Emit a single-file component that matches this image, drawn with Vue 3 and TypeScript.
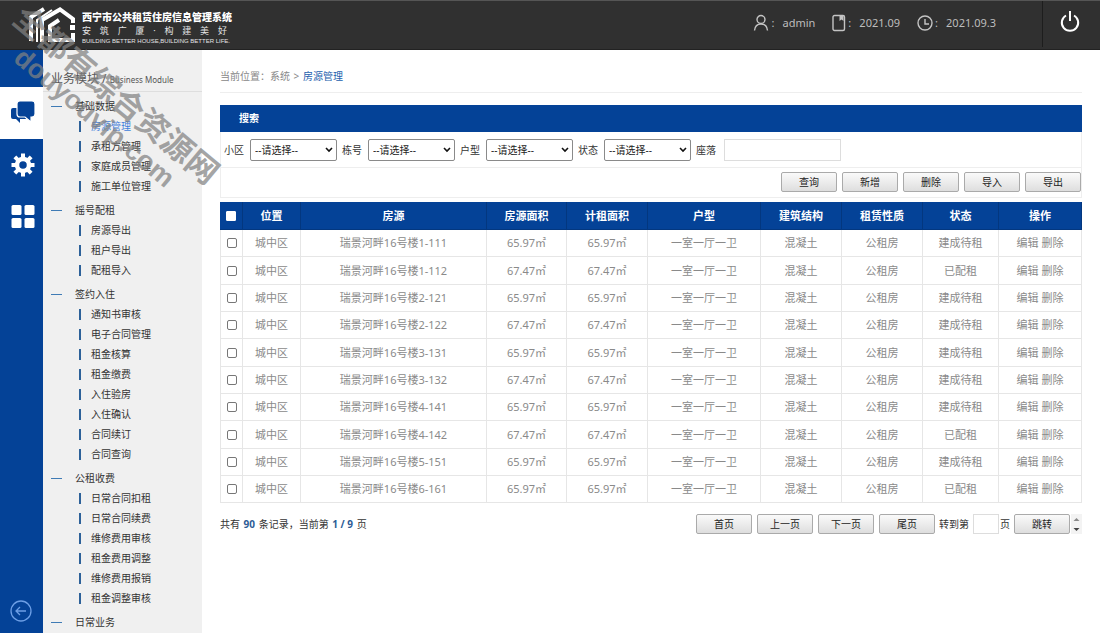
<script setup lang="ts">
import { ref } from 'vue'

interface MenuGroup {
  title: string
  items: string[]
}

interface House {
  name: string
  area: string
  status: string
}

const groups: MenuGroup[] = [
  { title: '基础数据', items: ['房源管理', '承租方管理', '家庭成员管理', '施工单位管理'] },
  { title: '摇号配租', items: ['房源导出', '租户导出', '配租导入'] },
  {
    title: '签约入住',
    items: ['通知书审核', '电子合同管理', '租金核算', '租金缴费', '入住验房', '入住确认', '合同续订', '合同查询'],
  },
  {
    title: '公租收费',
    items: ['日常合同扣租', '日常合同续费', '维修费用审核', '租金费用调整', '维修费用报销', '租金调整审核'],
  },
  { title: '日常业务', items: [] },
]

const filters: string[] = ['小区', '栋号', '户型', '状态']
const actions: string[] = ['查询', '新增', '删除', '导入', '导出']
const pagers: string[] = ['首页', '上一页', '下一页', '尾页']
const columns: string[] = ['位置', '房源', '房源面积', '计租面积', '户型', '建筑结构', '租赁性质', '状态', '操作']

const houses: House[] = [
  { name: '瑞景河畔16号楼1-111', area: '65.97㎡', status: '建成待租' },
  { name: '瑞景河畔16号楼1-112', area: '67.47㎡', status: '已配租' },
  { name: '瑞景河畔16号楼2-121', area: '65.97㎡', status: '建成待租' },
  { name: '瑞景河畔16号楼2-122', area: '67.47㎡', status: '建成待租' },
  { name: '瑞景河畔16号楼3-131', area: '65.97㎡', status: '建成待租' },
  { name: '瑞景河畔16号楼3-132', area: '67.47㎡', status: '建成待租' },
  { name: '瑞景河畔16号楼4-141', area: '65.97㎡', status: '建成待租' },
  { name: '瑞景河畔16号楼4-142', area: '67.47㎡', status: '已配租' },
  { name: '瑞景河畔16号楼5-151', area: '65.97㎡', status: '建成待租' },
  { name: '瑞景河畔16号楼6-161', area: '65.97㎡', status: '已配租' },
]

const active = ref('房源管理')
const address = ref('')
const targetPage = ref('')
</script>

<template>
  <div class="app">
    <header class="top">
      <svg class="logo" viewBox="0 0 48 38" aria-hidden="true">
        <g fill="none" stroke="#fff">
          <path d="M3 35V11L16 3" stroke-width="4" />
          <path d="M9 36V14L24 4" stroke-width="2" />
          <path d="M14 36V14L32 3.500L45 13V17" stroke-width="4" />
          <path d="M31 14L22 20V34H45V27" stroke-width="4" />
        </g>
        <rect x="42" y="19" width="5" height="5" fill="#fff" />
      </svg>
      <div class="brand">
        <strong>西宁市公共租赁住房信息管理系统</strong>
        <span class="slogan"><i v-for="(c, n) in '安筑广厦·构建美好'" :key="n">{{ c }}</i></span>
        <small>BUILDING BETTER HOUSE,BUILDING BETTER LIFE.</small>
      </div>
      <div class="meta">
        <span class="user">
          <svg viewBox="0 0 16 18" width="16" height="18" aria-hidden="true">
            <g fill="none" stroke="#c4c4c4" stroke-width="1.4">
              <circle cx="8" cy="5.5" r="4" />
              <path d="M1.5 16.5C2 12 4.500 10 8 10S14 12 14.500 16.500" />
            </g>
          </svg>
          <b>:</b>admin
        </span>
        <span class="month">
          <svg viewBox="0 0 14 18" width="14" height="18" aria-hidden="true">
            <rect x="1" y="1.500" width="11.500" height="15" rx="1.500" fill="none" stroke="#c4c4c4" stroke-width="1.400" />
            <path d="M7.500 2H11.500V7L9.500 5.500L7.500 7Z" fill="#c4c4c4" />
          </svg>
          <b>:</b>2021.09
        </span>
        <span class="day">
          <svg viewBox="0 0 16 18" width="16" height="18" aria-hidden="true">
            <g fill="none" stroke="#c4c4c4" stroke-width="1.4">
              <circle cx="8" cy="9" r="7" />
              <path d="M8 5V10H12" />
            </g>
          </svg>
          <b>:</b>2021.09.3
        </span>
      </div>
      <button class="power" type="button" aria-label="退出">
        <svg viewBox="0 0 20 24" width="20" height="24" aria-hidden="true">
          <g fill="none" stroke="#fff" stroke-width="2">
            <path d="M6 5.500A8.200 8.200 0 1 0 14 5.500" />
            <path d="M10 1V11" />
          </g>
        </svg>
      </button>
    </header>

    <div class="body">
      <nav class="rail" aria-label="模块">
        <button type="button" class="tile on" aria-label="业务">
          <svg viewBox="0 0 26 26" width="26" height="26" aria-hidden="true">
            <path d="M3 8H16V19H10V23L6 19H3Q1 19 1 17V10Q1 8 3 8Z" fill="#044297" />
            <path d="M10 1H22Q25 1 25 4V14Q25 17 22 17H21V22L15 17H10Q7 17 7 14V4Q7 1 10 1Z" fill="#044297" stroke="#fff" stroke-width="1.200" />
          </svg>
        </button>
        <button type="button" class="tile" aria-label="设置">
          <svg viewBox="0 0 24 24" width="24" height="24" aria-hidden="true">
            <g fill="#fff">
              <rect v-for="a in 8" :key="a" x="10" y="0.500" width="4" height="7" :transform="`rotate(${a * 45} 12 12)`" />
            </g>
            <circle cx="12" cy="12" r="6" fill="none" stroke="#fff" stroke-width="4.500" />
          </svg>
        </button>
        <button type="button" class="tile" aria-label="应用">
          <svg viewBox="0 0 24 24" width="24" height="24" aria-hidden="true">
            <g fill="#fff">
              <rect x="0.500" y="0" width="10" height="10" rx="1.500" />
              <rect x="13.500" y="0" width="10" height="10" rx="1.500" />
              <rect x="0.500" y="13" width="10" height="10" rx="1.500" />
              <rect x="13.500" y="13" width="10" height="10" rx="1.500" />
            </g>
          </svg>
        </button>
        <button type="button" class="back" aria-label="收起">
          <svg viewBox="0 0 22 22" width="22" height="22" aria-hidden="true">
            <g fill="none" stroke="#6d9fe6" stroke-width="1.3">
              <circle cx="11" cy="11" r="10" />
              <path d="M16 11H6.500M10 7L6 11L10 15" />
            </g>
          </svg>
        </button>
      </nav>

      <aside class="side">
        <h2>业务模块 / <small>Business Module</small></h2>
        <section v-for="g in groups" :key="g.title">
          <h3>{{ g.title }}</h3>
          <ul>
            <li v-for="item in g.items" :key="item">
              <a href="#" :class="{ current: item === active }" @click.prevent="active = item">{{ item }}</a>
            </li>
          </ul>
        </section>
      </aside>

      <main class="main">
        <p class="crumb">当前位置：系统 <span>&gt;</span> <a href="#">房源管理</a></p>

        <form class="search" @submit.prevent>
          <h1>搜索</h1>
          <div class="fields">
            <label v-for="f in filters" :key="f">
              {{ f }}
              <select><option>--请选择--</option></select>
            </label>
            <label>座落 <input v-model="address" class="address" type="text" /></label>
          </div>
          <div class="actions">
            <button v-for="a in actions" :key="a" class="btn" type="button">{{ a }}</button>
          </div>
        </form>

        <table class="grid">
          <colgroup>
            <col class="c-check" /><col class="c-place" /><col class="c-name" /><col class="c-size" />
            <col class="c-area" /><col class="c-type" /><col class="c-area" /><col class="c-area" />
            <col class="c-state" /><col class="c-ops" />
          </colgroup>
          <thead>
            <tr>
              <th><input type="checkbox" aria-label="全选" /></th>
              <th v-for="c in columns" :key="c">{{ c }}</th>
            </tr>
          </thead>
          <tbody>
            <tr v-for="h in houses" :key="h.name">
              <td><input type="checkbox" :aria-label="h.name" /></td>
              <td>城中区</td>
              <td>{{ h.name }}</td>
              <td>{{ h.area }}</td>
              <td>{{ h.area }}</td>
              <td>一室一厅一卫</td>
              <td>混凝土</td>
              <td>公租房</td>
              <td>{{ h.status }}</td>
              <td><a href="#">编辑</a> <a href="#">删除</a></td>
            </tr>
          </tbody>
        </table>

        <footer class="foot">
          <p>共有 <b>90</b> 条记录，当前第 <b>1 / 9</b> 页</p>
          <div class="pager">
            <button v-for="p in pagers" :key="p" class="btn" type="button">{{ p }}</button>
            <label>转到第 <input v-model="targetPage" type="text" /> 页</label>
            <button class="btn" type="button">跳转</button>
            <span class="spin" aria-hidden="true">
              <svg viewBox="0 0 10 20" width="11" height="20">
                <path d="M2 7L5 4L8 7Z" fill="#8a8a8a" />
                <path d="M2 14L5 17L8 14Z" fill="#444" />
              </svg>
            </span>
          </div>
        </footer>
      </main>
    </div>

    <div class="mark" aria-hidden="true">
      <span>全都有综合资源网</span>
      <span class="site">douyouvip.com</span>
    </div>
  </div>
</template>

<style>
body {
  margin: 0;
  background: #fff;
}
</style>

<style scoped>
.app {
  position: relative;
  display: flex;
  flex-direction: column;
  height: 100vh;
  overflow: hidden;
  font: 10px/20px "Noto Sans", "Noto Sans CJK SC", sans-serif;
  color: #333;
}
h1, h2, h3, p, ul {
  margin: 0;
  padding: 0;
  font-weight: normal;
}
ul {
  list-style: none;
}
a {
  color: inherit;
  text-decoration: none;
}
button, input, select {
  box-sizing: border-box;
  margin: 0;
  font: inherit;
}

.top {
  display: flex;
  flex: none;
  align-items: center;
  height: 50px;
  box-sizing: border-box;
  border-top: 1px solid #555;
  border-bottom: 1px solid #222;
  background: #303030;
  color: #bdbdbd;
}
.logo {
  width: 48px;
  height: 38px;
  margin-left: 28px;
}
.brand {
  display: flex;
  flex-direction: column;
  width: 145px;
  margin-left: 6px;
  padding-top: 4px;
  color: #e4e4e4;
  white-space: nowrap;
}
.brand strong {
  font: 900 10px/14px "Noto Sans CJK SC", sans-serif;
  color: #fff;
}
.slogan {
  display: flex;
  justify-content: space-between;
  font-size: 9px;
  line-height: 13px;
}
.slogan i {
  font-style: normal;
}
.brand small {
  font: 6px/8px "Liberation Sans", sans-serif;
}
.meta {
  display: flex;
  gap: 17px;
  margin-left: auto;
  padding-bottom: 4px;
  font-size: 11px;
}
.meta span {
  display: flex;
  align-items: center;
}
.meta b {
  width: 11px;
  padding-left: 2px;
  font-weight: normal;
}
.power {
  display: flex;
  align-items: center;
  align-self: flex-start;
  justify-content: center;
  width: 58px;
  height: 46px;
  margin-left: 46px;
  padding: 0 4px 4px 0;
  border: 0;
  border-left: 1px solid #1d1d1d;
  background: none;
}

.body {
  display: flex;
  flex: 1;
  min-height: 0;
}
.rail {
  display: flex;
  flex: none;
  flex-direction: column;
  align-items: center;
  width: 43px;
  padding-top: 37px;
  box-sizing: border-box;
  background: #044297;
}
.tile {
  display: flex;
  align-items: center;
  justify-content: center;
  width: 43px;
  height: 52px;
  padding: 0 0 0 2px;
  border: 0;
  background: none;
}
.tile.on {
  background: #fff;
}
.back {
  display: flex;
  margin: auto 2px 11px 0;
  padding: 0;
  border: 0;
  background: none;
}
.side {
  flex: none;
  width: 159px;
  overflow: hidden;
  background: #f0f0f0;
}
.side h2 {
  padding: 19px 0 1px 8px;
  border-bottom: 1px solid #dedede;
  font-size: 12px;
  line-height: 20px;
  color: #555;
}
.side h2 small {
  font-size: 8px;
}
.side h3 {
  display: flex;
  align-items: center;
  gap: 13px;
  padding: 4px 0 0 8px;
  font-size: 10px;
  line-height: 20px;
}
.side h3::before {
  width: 11px;
  height: 1px;
  background: #3f7bb5;
  content: "";
}
.side li {
  display: flex;
  align-items: center;
  height: 20px;
  padding-left: 36px;
}
.side li::before {
  width: 2px;
  height: 11px;
  margin-right: 10px;
  background: #2d6199;
  content: "";
}
.side .current {
  color: #3f7edb;
}

.main {
  flex: 1;
  min-width: 0;
  padding: 1px 18px 0;
}
.crumb {
  padding: 15px 0 6px;
  margin-bottom: 12px;
  border-bottom: 1px solid #eee;
  color: #888;
}
.crumb span {
  margin: 0 1px;
}
.crumb a {
  color: #2360ad;
}
.search {
  border: 1px solid #eee;
  border-top: 0;
}
.search h1 {
  margin: 0 -1px;
  padding: 3px 19px 4px;
  background: #044297;
  font-size: 10px;
  font-weight: bold;
  color: #fff;
}
.fields {
  display: flex;
  gap: 5px;
  padding: 7px 3px 6px;
  border-bottom: 1px solid #eee;
}
.fields label {
  display: flex;
  align-items: center;
  gap: 6px;
}
.fields select {
  appearance: none;
  width: 87px;
  height: 22px;
  padding: 0 4px;
  border: 1px solid #8a8a8a;
  border-radius: 2px;
  background: #fff url("data:image/svg+xml,%3Csvg xmlns='http://www.w3.org/2000/svg' viewBox='0 0 8 6'%3E%3Cpath d='M1 1L4 4L7 1' fill='none' stroke='%23111' stroke-width='1.6'/%3E%3C/svg%3E") right 3px center / 8px 6px no-repeat;
  color: #222;
}
.fields .address {
  width: 117px;
  height: 22px;
  margin-left: 2px;
  border: 1px solid #ddd;
}
.actions {
  display: flex;
  justify-content: flex-end;
  gap: 5px;
  padding: 4px 0 5px;
}
.btn {
  width: 56px;
  height: 20px;
  padding: 0;
  border: 1px solid #aaa;
  border-radius: 2px;
  background: linear-gradient(#fafafa, #dedede);
  line-height: 18px;
  color: #222;
}

.grid {
  width: 100%;
  margin-top: 4px;
  border-spacing: 0;
  table-layout: fixed;
  font-size: 11px;
  color: #8a8a8a;
}
.c-check { width: 23px; }
.c-place { width: 58px; }
.c-name { width: 186px; }
.c-size { width: 80px; }
.c-area { width: 81px; }
.c-type { width: 113px; }
.c-state { width: 76px; }
.grid th, .grid td {
  height: 27px;
  padding: 0;
  box-sizing: border-box;
  border-right: 1px solid #e6e6e6;
  border-bottom: 1px solid #e6e6e6;
  text-align: center;
  white-space: nowrap;
}
.grid th {
  height: 28px;
  border-color: #03377f;
  background: #044297;
  color: #fff;
}
.grid td:first-child {
  border-left: 1px solid #e6e6e6;
}
.grid tr:nth-child(3n + 2) td {
  height: 28px;
}
.grid input {
  appearance: none;
  display: block;
  width: 10px;
  height: 10px;
  margin: 0 auto;
  border: 1px solid #777;
  border-radius: 2px;
  background: #fff;
}
.grid th input {
  border-color: #fff;
  border-radius: 1px;
}

.foot {
  display: flex;
  align-items: flex-start;
  justify-content: space-between;
  padding-top: 11px;
}
.foot b {
  margin: 0 1px;
  color: #2d5c96;
}
.pager {
  display: flex;
  gap: 5px;
}
.pager label {
  display: flex;
  align-items: center;
  gap: 1px;
  margin: 0 -1px;
}
.pager input {
  width: 26px;
  height: 20px;
  margin-left: 3px;
  border: 1px solid #ddd;
}
.spin {
  display: flex;
  margin-left: -4px;
  background: #f3f3f3;
}

/* Watermark laid over the page */
.mark {
  position: absolute;
  top: 0;
  left: 29px;
  display: flex;
  flex-direction: column;
  transform: rotate(40deg);
  transform-origin: 0 0;
  font: bold 32px/28px "Noto Sans CJK SC", sans-serif;
  color: rgba(130, 130, 130, 0.72);
  white-space: nowrap;
  pointer-events: none;
}
.site {
  margin-top: 5px;
  padding-left: 26px;
  font: bold 27px/30px "Liberation Sans", sans-serif;
}
</style>
